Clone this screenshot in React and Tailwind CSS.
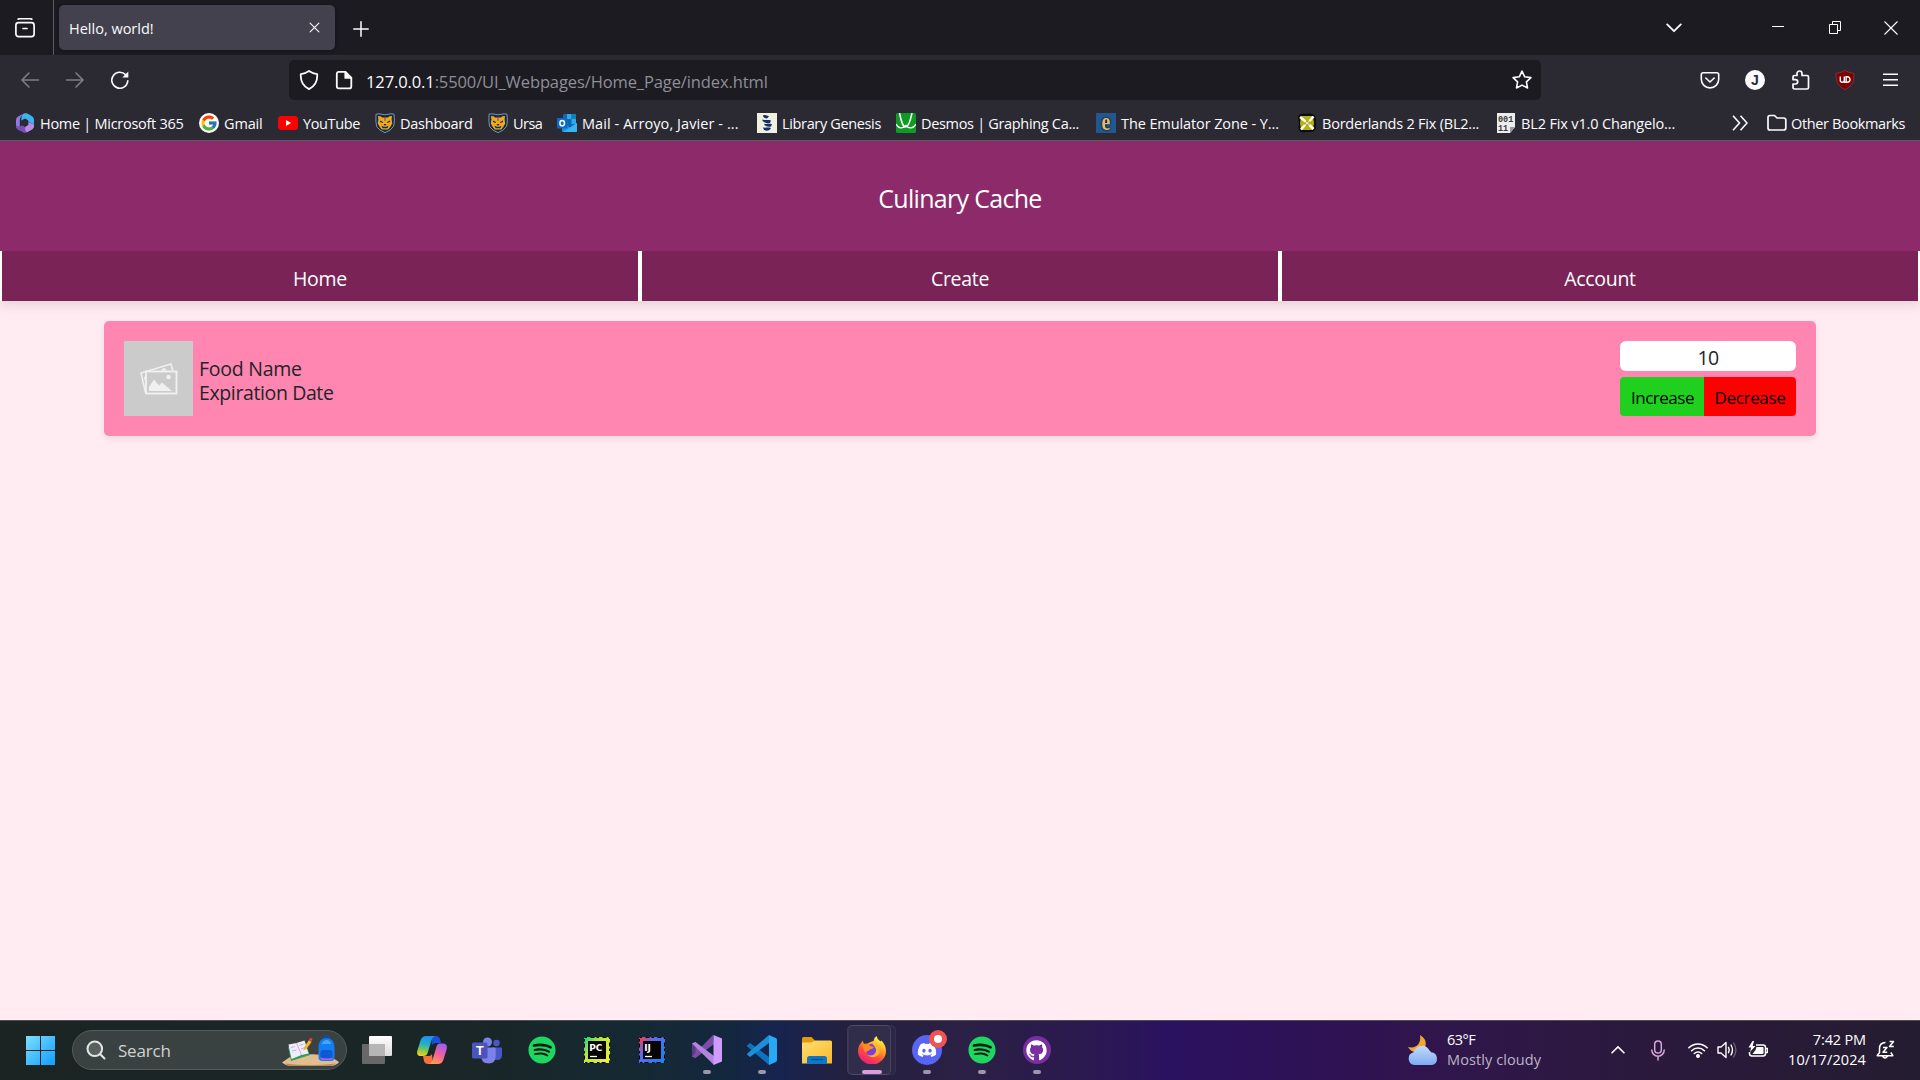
import React from 'react';
import { FaDiscord, FaGithub, FaSpotify } from 'react-icons/fa';
import { FcGoogle } from 'react-icons/fc';

/* ---------- browser chrome icons ---------- */

const Line = ({ size = 20, className = '', w = 1.5, children }) => (
  <svg
    width={size}
    height={size}
    viewBox="0 0 20 20"
    fill="none"
    stroke="currentColor"
    strokeWidth={w}
    strokeLinecap="round"
    strokeLinejoin="round"
    className={`shrink-0 ${className}`}
  >
    {children}
  </svg>
);

const FirefoxView = () => (
  <Line w={1.7} className="text-[#fbfbfe]">
    <path d="M3.2 1.2C3.6.8 4.2.7 5 .7h10c.8 0 1.4.1 1.8.5" />
    <rect x="0.9" y="4.6" width="18.2" height="14" rx="2.6" />
    <path d="M8 10.5h4" />
  </Line>
);

const Reload = () => (
  <Line w={1.6}>
    <path d="M17.8 10.7A8 8 0 1 1 15.5 4.6L17 6.2" />
    <path d="M18.3 1.6v6h-6z" fill="currentColor" stroke="none" />
  </Line>
);

/* ---------- bookmark favicons ---------- */

const M365 = () => (
  <svg width="20" height="20" viewBox="0 0 20 20">
    <path d="M9 .5 3 3.6Q1 4.700 1 7v6q0 2.200 2 3.400l3 1.700c-1-1-1.200-2-1.200-4V7.500C4.800 4.500 7 2 9 .5z" fill="#8f7be0" />
    <path d="M9 .5c2-.8 3.500 0 4.800.7L17 3.200q2 1.200 2 3.600v4.700L13 8.600V7.200L10 5.500 6.500 7.500C6 4 7 1.500 9 .5z" fill="#3cb5ee" />
    <path d="M1 12c2 2 4 1.500 6 .5l6-3.600 6 2.600v1.800q0 2-2 3.200l-5 2.800q-2 1-4 0l-5-2.900q-2-1.200-2-3.400z" fill="#7950b5" />
    <path d="M13 9l6 2.500v1.800q0 2-2 3.200l-5 2.800c-3-2-2-6 1-10.300z" fill="#b78ce6" />
    <path d="m10 6 3.300 2v4L10 14l-3.300-2V8z" fill="#2b2a33" />
  </svg>
);

const Gmail = () => (
  <span className="flex size-5 items-center justify-center rounded-full bg-white">
    <FcGoogle size={18} />
  </span>
);

const YouTube = () => (
  <svg width="20" height="20" viewBox="0 0 20 20">
    <rect x="0" y="3" width="20" height="14" rx="3.500" fill="#f00" />
    <path d="M8 7v6l5-3z" fill="#fff" />
  </svg>
);

const Bear = () => (
  <svg width="20" height="20" viewBox="0 0 20 20">
    <path d="M1 1.200 4 .8l6 1 6-1 3 .4c.5 5 .6 9-.6 12.300Q16 17.500 10 19.700 4 17.500 1.600 13.500.500 9 1 1.200z" fill="#122b4d" stroke="#8aa0b4" strokeWidth="0.900" />
    <path d="m3 3 2.600.3L7 4.500h6l1.400-1.200L17 3l-.4 3.400.6 4-2 3.600-2 2.600H6.800l-2-2.600-2-3.600.6-4z" fill="#f2a81d" />
    <path d="m5 7.500 3 1.500-.3 1L5 9zM15 7.500l-3 1.500.3 1L15 9zM8.500 11h3L10 13zM6.500 12.500l1 2.800h5l1-2.800-2 1.300h-3zM9.700 4.500h.6V8h-.6z" fill="#122b4d" />
  </svg>
);

const Outlook = () => (
  <svg width="20" height="20" viewBox="0 0 20 20">
    <rect x="6" y="1" width="13" height="12" rx="1" fill="#1066b5" />
    <rect x="10" y="1" width="4.500" height="5" fill="#32a9e7" />
    <rect x="14.500" y="1" width="4.500" height="5" fill="#167eb4" />
    <rect x="14.500" y="6" width="4.500" height="5" fill="#32a9e7" />
    <path d="M5 10h1l7 4 7-4v8a1 1 0 0 1-1 1H6a1 1 0 0 1-1-1z" fill="#1f8fe0" />
    <path d="m20 10-14 9h13a1 1 0 0 0 1-1z" fill="#35b8f1" />
    <rect x="0" y="5" width="10.500" height="10.500" rx="1" fill="#0a6cc8" />
    <ellipse cx="5.200" cy="10.200" rx="2.300" ry="2.600" fill="none" stroke="#fff" strokeWidth="1.500" />
  </svg>
);

const LibGen = () => (
  <svg width="20" height="20" viewBox="0 0 20 20">
    <rect width="20" height="20" fill="#f0f0e0" />
    <path d="M6 2.500c2-1 4 0 6 .7l-2 2.300c-2 0-4-1-4-3zM5 6.500c3 1 7 0 9 1l-1 2.500c-3 .5-7 0-8-3.500zM7 10.700c3 .6 6-.6 8 .6l-1 2.200c-3 .7-6 0-7-2.800zM6 14.500c3 .5 5-.5 8 .5-1 3-7 4.500-8-.5z" fill="#12306b" />
  </svg>
);

const Desmos = () => (
  <svg width="20" height="20" viewBox="0 0 20 20">
    <rect width="20" height="20" rx="1.500" fill="#0f9a25" />
    <path d="M3.500 0c1.500 7 3 14 6 14s5-7 6.500-14" fill="none" stroke="#fff" strokeWidth="1.500" />
    <path d="M0 11c3 5 6 5 10 1.500 3 3.500 7 3.500 10-1.500" fill="none" stroke="#fff" strokeWidth="1.300" />
  </svg>
);

const Emulator = () => (
  <span className="flex size-5 items-center justify-center bg-[#23578f]">
    <span className="-mt-[5px] scale-y-125 font-['Liberation_Serif',serif] text-[20px] leading-none font-bold text-[#e0bd6c] [text-shadow:0_0_2px_#14202c,0_0_2px_#14202c]">
      e
    </span>
  </span>
);

const Nexus = () => (
  <svg width="20" height="20" viewBox="0 0 20 20">
    <path d="M2 2q2-2 5-1l5-.5q4-.5 6 2.500 1.500 3 .6 6 1.200 5-.6 8-2 2.500-7 1.800L6 19.500Q2 19 1.500 15L2 9Q0 5 2 2z" fill="#0b0b0b" />
    <path d="M4 3h12l1 7-1 7H4l-1-7z" fill="#b5b013" />
    <path d="M3 4 8.500 8.500M16.500 3.500l-4 4.500M4 16.500l4-4.500M16.500 16 12.500 12" stroke="#fff" strokeWidth="2.500" />
    <path d="M4 5l12 10M15.500 5l-11 10.500" stroke="#fff" strokeWidth="0.800" />
  </svg>
);

const Binary = () => (
  <svg width="20" height="20" viewBox="0 0 20 20">
    <path d="M1 0h18v14l-5 6H1z" fill="#ededed" />
    <path d="m14 20 5-6h-5z" fill="#9a9a9a" />
    <g fill="#3a3a3a" fontFamily="Liberation Mono, monospace" fontWeight="bold" fontSize="8.500">
      <text x="2" y="8.500">001</text>
      <text x="2" y="18">11</text>
    </g>
  </svg>
);

const bookmarks = [
  ['Home | Microsoft 365', M365, 'w-[184px]', 'tracking-[-0.280px]'],
  ['Gmail', Gmail, 'w-[79px]', 'tracking-[-0.150px]'],
  ['YouTube', YouTube, 'w-[97px]', 'tracking-[-0.380px]'],
  ['Dashboard', Bear, 'w-[113px]', 'tracking-[-0.250px]'],
  ['Ursa', Bear, 'w-[69px]', 'tracking-[-0.550px]'],
  ['Mail - Arroyo, Javier - ...', Outlook, 'w-[200px]', 'tracking-[0.080px]'],
  ['Library Genesis', LibGen, 'w-[139px]', 'tracking-[-0.350px]'],
  ['Desmos | Graphing Ca...', Desmos, 'w-[200px]', 'tracking-[-0.320px]'],
  ['The Emulator Zone - Y...', Emulator, 'w-[201px]', 'tracking-[-0.100px]'],
  ['Borderlands 2 Fix (BL2...', Nexus, 'w-[199px]', 'tracking-[-0.220px]'],
  ['BL2 Fix v1.0 Changelo...', Binary, 'w-[201px]', 'tracking-[-0.150px]'],
];

function TabStrip() {
  return (
    <div className="flex h-[55px] items-center bg-[#1c1b22] text-[#fbfbfe]">
      <div className="flex h-full w-[54px] items-center justify-center border-r border-[#5b5b66] pr-[3px]">
        <FirefoxView />
      </div>
      <div className="ml-[5px] flex h-[45px] w-[276px] items-center justify-between rounded-[5px] bg-[#42414d] pr-[15px] pl-[10px] shadow-[0_0_4px_rgba(0,0,0,0.400)]">
        <span className="pt-[2px] text-[14.500px]">Hello, world!</span>
        <Line size={11} w={2} className="mb-px">
          <path d="m2 2 16 16M18 2 2 18" />
        </Line>
      </div>
      <Line size={16} w={1.900} className="mt-[2px] ml-[18px]">
        <path d="M10 1v18M1 10h18" />
      </Line>
      <div className="ml-auto flex items-center">
        <Line size={16} w={2.300} className="mr-[90px]">
          <path d="m1.500 5.500 8.500 8.500 8.500-8.500" />
        </Line>
        <div className="mb-[3px] h-px w-3 bg-white" />
        <svg width="12" height="13" viewBox="0 0 12 13" fill="none" stroke="#fff" className="ml-[45px]">
          <path d="M.5 3.500h8v9h-8zM3.500 3V.5h8v9H9" />
        </svg>
        <svg width="14" height="14" viewBox="0 0 14 14" stroke="#fff" strokeWidth="1.100" className="mr-[22px] ml-[43px]">
          <path d="m.5.500 13 13M13.500.500l-13 13" />
        </svg>
      </div>
    </div>
  );
}

function Toolbar() {
  return (
    <div className="flex h-[50px] items-center bg-[#2b2a33] text-[#fbfbfe]">
      <Line className="ml-5 text-[#7e7d84]" w={1.600}>
        <path d="M18.500 10H2M9 3 2 10l7 7" />
      </Line>
      <Line className="ml-[25px] text-[#7e7d84]" w={1.600}>
        <path d="M1.500 10H18M11 3l7 7-7 7" />
      </Line>
      <span className="ml-[25px]"><Reload /></span>
      <div className="ml-[159px] flex h-10 w-[1252px] items-center rounded-[5px] bg-[#1c1b22] pr-[9px] pl-[10px]">
        <Line w={1.800}>
          <path d="M10 .9c2.500 1.700 5 2.700 8.200 3.300.4 6-1.500 11.500-8.200 14.900C3.300 15.700 1.400 10.200 1.800 4.200 5 3.600 7.500 2.600 10 .9z" />
        </Line>
        <Line w={1.800} className="ml-[15px]">
          <path d="M4.800 1.900h6.500l6 6v8.500q0 2-2 2H4.800q-2 0-2-2V3.900q0-2 2-2z" />
          <path d="M11.300 1.900v6h6z" fill="currentColor" />
        </Line>
        <div className="ml-[12px] pt-[5px] text-[16.500px] tracking-[-0.110px] text-[#8f8f96]">
          <span className="text-[#fbfbfe]">127.0.0.1</span>:5500/UI_Webpages/Home_Page/index.html
        </div>
        <Line w={1.600} className="ml-auto">
          <path d="m10 1.200 2.700 5.600 6.200.8-4.500 4.300 1.100 6.100L10 15.100 4.500 18l1.100-6.100L1.100 7.600l6.200-.8z" />
        </Line>
      </div>
      <Line w={1.600} className="ml-[159px]">
        <path d="M3.200 2.700h13.600q1.900 0 1.900 1.900v4.600a8.700 8.700 0 0 1-17.400 0V4.600q0-1.900 1.900-1.900zM5.800 8l4.200 4 4.200-4" />
      </Line>
      <span className="ml-[25px] flex size-5 items-center justify-center rounded-full bg-[#fbfbfe] font-['Liberation_Sans',sans-serif] text-[14px] leading-none font-bold text-[#2b2a33]">
        J
      </span>
      <Line w={1.700} className="ml-[26px]">
        <path d="M2 7.500V7q0-1.500 1.500-1.500H6V3.500a2.500 2.500 0 0 1 5 0v2h5q1.500 0 1.500 1.500v10.500q0 1.500-1.500 1.500H3.500Q2 19 2 17.500V14h2.500a2.200 2.200 0 0 0 0-4.400H2z" />
      </Line>
      <svg width="20" height="20" viewBox="0 0 20 20" className="ml-[24px]">
        <path d="M10 .3c2.500 1.800 5 2.500 8.800 3 .3 6.500-.3 12-8.800 16.400C1.500 15.300.9 9.800 1.200 3.300 5 2.800 7.500 2.100 10 .3z" fill="#800000" stroke="#a04048" strokeWidth="0.600" />
        <path d="M5.300 6.500v3.700q0 2 2 2t2-2V6.500M9.300 12.200h3a2.700 2.700 0 0 0 0-5.400h-1.200v5.400" fill="none" stroke="#fff" strokeWidth="1.400" />
      </svg>
      <svg width="15" height="20" viewBox="0 0 15 20" stroke="#fbfbfe" strokeWidth="1.500" className="ml-[28px]">
        <path d="M0 4.200h15M0 9.700h15M0 15.200h15" />
      </svg>
    </div>
  );
}

function BookmarksBar() {
  return (
    <div className="flex h-9 items-center border-b border-[#5a5964] bg-[#2b2a33] pt-px pl-[15px] text-[14.500px] whitespace-nowrap text-[#fbfbfe]">
      {bookmarks.map(([label, Icon, width, tracking]) => (
        <div key={label} className={`flex shrink-0 items-center gap-[5px] ${width}`}>
          <span className="size-5 shrink-0"><Icon /></span>
          <span className={`pt-px ${tracking}`}>{label}</span>
        </div>
      ))}
      <svg width="16" height="16" viewBox="0 0 16 16" fill="none" stroke="currentColor" strokeWidth="1.600" className="ml-[35px]">
        <path d="m1 .8 6.500 7.200L1 15.200M8.500.8 15 8l-6.500 7.200" />
      </svg>
      <Line w={1.700} className="ml-[19px]">
        <path d="M1 15V4.500Q1 2.500 3 2.500h4.500L10 5h6.500q2.300 0 2.300 2v8q0 2-2.300 2H3q-2 0-2-2z" />
      </Line>
      <span className="ml-[4px] pt-px tracking-[-0.360px]">Other Bookmarks</span>
    </div>
  );
}

/* ---------- web page ---------- */

const Placeholder = () => (
  <svg width="69" height="75" viewBox="0 0 69 75" className="shrink-0 bg-[#cbcbcb]">
    <g fill="none" stroke="#f0f0f0" strokeWidth="1.600">
      <path d="M21.500 51.500 17 32l30-9 1.700 6.500" />
      <rect x="22" y="30.500" width="30.500" height="22" strokeWidth="1.900" />
    </g>
    <circle cx="44.500" cy="36" r="2.300" fill="#f0f0f0" />
    <path d="M25 50v-4l5-7.500 5 6 3-3 10 8.500zM37.500 30a2.500 2.500 0 0 1 5-.5z" fill="#f0f0f0" />
    <path d="m22 35-2 1 2 10z" fill="#f0f0f0" />
  </svg>
);

function WebPage() {
  return (
    <main className="flex-1 bg-[#ffebf1] text-[#212529]">
      <header className="relative z-10 flex h-[110px] items-center justify-center bg-[#8d2a69] pt-[5px] text-[25px] tracking-[-0.700px] text-white">
        Culinary Cache
      </header>
      <nav className="grid h-[50px] grid-cols-3 gap-1 bg-white px-[2px] shadow-[0_3px_12px_rgba(0,0,0,0.120)]">
        {['Home', 'Create', 'Account'].map((label) => (
          <a key={label} className="flex items-center justify-center bg-[#7a2357] pt-[5px] text-[19.500px] tracking-[-0.300px] text-white">
            {label}
          </a>
        ))}
      </nav>
      <section className="mx-[104px] mt-5 flex h-[115px] justify-between rounded-[5px] bg-[#ff86b0] p-5 shadow-[0_3px_6px_rgba(0,0,0,0.080)]">
        <div className="flex items-center gap-[6px]">
          <Placeholder />
          <div className="pt-[4px] text-[19.500px] leading-6 tracking-[-0.380px]">
            <p className="tracking-[-0.250px]">Food Name</p>
            <p>Expiration Date</p>
          </div>
        </div>
        <div className="w-44">
          <div className="flex h-[30px] items-center justify-center rounded-[6px] bg-white pt-[4px] text-[19.500px] tracking-[-0.600px]">10</div>
          <div className="mt-[6px] flex h-[39px] overflow-hidden rounded-[4px] text-[17px] text-black">
            <button className="w-[84px] bg-[#1fd01f] pt-[3px] pl-px tracking-[-0.500px]">Increase</button>
            <button className="w-[92px] bg-[#ff0000] pt-[3px] tracking-[-0.350px]">Decrease</button>
          </div>
        </div>
      </section>
    </main>
  );
}

/* ---------- taskbar ---------- */

const StartIcon = () => (
  <svg width="29" height="29" viewBox="0 0 29 29">
    <defs>
      <linearGradient id="win" x1="0" y1="0" x2="1" y2="1" gradientUnits="objectBoundingBox">
        <stop offset="0" stopColor="#7be0ff" />
        <stop offset="1" stopColor="#0f9dff" />
      </linearGradient>
      <mask id="panes">
        <path d="M0 0h14v14H0zM15 0h14v14H15zM0 15h14v14H0zM15 15h14v14H15z" fill="#fff" />
      </mask>
    </defs>
    <rect width="29" height="29" fill="url(#win)" mask="url(#panes)" />
  </svg>
);

const SchoolArt = () => (
  <svg width="58" height="32" viewBox="0 0 58 32">
    <path d="M0 27.500 8 22q20-5 40-1l9 6q-2 3-8 4H10q-6 0-10-3.500z" fill="#e3bd8f" />
    <path d="M3 28.500q25 3 51 0l-5 2.500H10q-5 0-7-2.500z" fill="#b98a5c" />
    <path d="m6 12 17-5 5 13-19 6z" fill="#2f9e57" />
    <path d="m6.500 9.500 8-1.500 8-2.500 4 13-7 1.500-10 4z" fill="#f1ecfa" />
    <path d="m14.500 8 5 12M9 12.500l4-1M10 16l4.500-1M17.500 10.500l4-1.500M19 14l4-1.500" stroke="#b9addb" strokeWidth="0.900" />
    <path d="m22 12.500 5-7.500 2.500 2-5 7-3.200 1.500z" fill="#f7b32d" />
    <path d="m26.700 5 1.600-2q1.500-.5 2.200 1l-1.200 2.500z" fill="#e9432f" />
    <path d="M41.500 4a3 3 0 0 1 6 0" fill="none" stroke="#0b4fb8" strokeWidth="1.600" />
    <path d="M36.500 13q0-10 8-10t8 10v9q0 4-4 4h-8q-4 0-4-4z" fill="#147df0" />
    <path d="M39.500 9q2-4 5-4t5 4z" fill="#46a6ff" />
    <rect x="38.500" y="15" width="12" height="9" rx="2.500" fill="#0d5bd2" />
    <path d="M38.500 22.500q6 2 12 0v.5q0 2-2.500 2h-7q-2.500 0-2.500-2z" fill="#b05ff0" />
  </svg>
);

const TaskView = () => (
  <svg width="30" height="28" viewBox="0 0 30 28">
    <defs>
      <linearGradient id="tv" x1="0" y1="0" x2="0" y2="1">
        <stop offset="0" stopColor="#ffffff" />
        <stop offset="1" stopColor="#dcdcdc" />
      </linearGradient>
    </defs>
    <rect x="0" y="8" width="23" height="20" rx="1" fill="#686868" />
    <rect x="7" y="0" width="23" height="20" rx="1" fill="url(#tv)" />
    <path d="M7 8h16v12H7z" fill="#b6b6b6" />
  </svg>
);

const Copilot = () => (
  <svg width="30" height="28" viewBox="0 0 30 28">
    <defs>
      <linearGradient id="cpA" x1="0.500" y1="0" x2="0.300" y2="1">
        <stop offset="0" stopColor="#1f8ff0" />
        <stop offset="0.400" stopColor="#22b0c8" />
        <stop offset="0.700" stopColor="#7cc653" />
        <stop offset="1" stopColor="#f5cf1c" />
      </linearGradient>
      <linearGradient id="cpB" x1="0.700" y1="0" x2="0.300" y2="1">
        <stop offset="0" stopColor="#a05cf5" />
        <stop offset="0.500" stopColor="#f0609c" />
        <stop offset="1" stopColor="#ff9a52" />
      </linearGradient>
    </defs>
    <path d="M14 0h5q3 0 4 3l1 4h-5q-3 0-4 2z" fill="#1b50d8" />
    <path d="M16 28h-5q-3 0-4-3l-1-5h6q2 0 3-2z" fill="#f8703a" />
    <path d="M9 0h9q-2.500 1-3.500 4l-3.700 12.500Q9.800 20 6.500 20H4q-5 0-3.600-5.500L3.500 4.500Q5 0 9 0z" fill="url(#cpA)" />
    <path d="M21 28h-9q2.500-1 3.500-4l3.700-12.500Q20.200 7 23.500 7.500H26q5 0 3.600 6l-3.100 10Q25 28 21 28z" fill="url(#cpB)" />
  </svg>
);

const Teams = () => (
  <svg width="30" height="27" viewBox="0 0 30 27">
    <circle cx="24.500" cy="6" r="3.200" fill="#4a57c8" />
    <path d="M20 10.500h9q1 0 1 1v6q0 5.500-5 5.500t-5-5.500z" fill="#4a57c8" />
    <circle cx="15.500" cy="5" r="4.500" fill="#7b83eb" />
    <path d="M9 10.500h13.500q1.200 0 1.200 1.200V19q0 7.500-7.200 7.500T9 19z" fill="#7b83eb" />
    <rect x="0" y="5.500" width="15.500" height="16" rx="1.500" fill="#4b53bc" />
    <text x="7.700" y="17.900" textAnchor="middle" fill="#fff" fontFamily="Liberation Sans" fontWeight="bold" fontSize="12.500">T</text>
  </svg>
);

const Spotify = () => (
  <span className="flex size-[28px] items-center justify-center">
    <span className="flex size-[26px] items-center justify-center rounded-full bg-[#101c14]">
      <FaSpotify size={28} className="shrink-0 text-[#1ed760]" />
    </span>
  </span>
);

function JetBrains({ id, label, stops }) {
  return (
    <svg width="26" height="26" viewBox="0 0 26 26">
      <defs>
        <linearGradient id={id} x1="0" y1="0.100" x2="1" y2="0.900">
          <stop offset="0" stopColor={stops[0]} />
          <stop offset="0.350" stopColor={stops[1]} />
          <stop offset="1" stopColor={stops[2]} />
        </linearGradient>
      </defs>
      <rect width="26" height="26" fill={`url(#${id})`} />
      <rect x="0.500" y="0.500" width="25" height="25" fill="none" stroke="#000" strokeDasharray="2.500 3.500 4 2" />
      <rect x="4" y="4" width="18" height="18" fill="#050505" />
      <text x="5.200" y="13.500" fill="#fff" fontFamily="DejaVu Sans" fontWeight="bold" fontSize="9">{label}</text>
      <path d="M6 19.500h7" stroke="#fff" strokeWidth="1.300" />
    </svg>
  );
}

const VisualStudio = () => (
  <svg width="30" height="30" viewBox="0 0 30 30">
    <path d="M0 8.500 3.500 7 12 15l-8.500 8L0 21.500z" fill="#7d4fa8" />
    <path d="M0 8.500 3.500 7v16L0 21.500z" fill="#5c3b85" />
    <path d="M21 0 0 21.500 3.500 23 22 9z" fill="#7a4da6" />
    <path d="M0 8.500 3.500 7 22 21v9L0 8.500z" fill="#b283e0" />
    <path d="m21.500 0 8.500 3.500v23L21.500 30z" fill="#cf9bff" />
  </svg>
);

const VSCode = () => (
  <svg width="30" height="30" viewBox="0 0 30 30">
    <path d="M0 10.500 3 8l19 14v8L.3 11.500z" fill="#0c74bd" />
    <path d="M22 0 .3 18.500Q-.3 19.500.5 20L3 22 22 8z" fill="#1b8fdc" />
    <path d="m22 0 6.800 3Q30 3.700 30 5v20q0 1.300-1.200 2L22 30z" fill="#29a9f3" />
  </svg>
);

const Folder = () => (
  <svg width="30" height="27" viewBox="0 0 30 27">
    <defs>
      <linearGradient id="fold" x1="0" y1="0" x2="1" y2="1">
        <stop offset="0" stopColor="#ffdf72" />
        <stop offset="1" stopColor="#f9b92a" />
      </linearGradient>
    </defs>
    <path d="M0 1.500Q0 0 1.500 0h8l3.500 3.500V10H0z" fill="#e09a0c" />
    <path d="M0 5.500h9.500L13 3.500h15.500q1.500 0 1.500 1.500v21.500H0z" fill="url(#fold)" />
    <path d="M5 27v-5.500q0-2.500 2.500-2.500h15q2.500 0 2.500 2.500V27z" fill="#1076c6" />
    <path d="M9 22.500h12" stroke="#0a4c8c" strokeWidth="1.300" />
  </svg>
);

const Firefox = () => (
  <svg width="28" height="28" viewBox="0 0 28 28">
    <defs>
      <linearGradient id="ff" x1="0.800" y1="0" x2="0.250" y2="1">
        <stop offset="0.100" stopColor="#fff044" />
        <stop offset="0.400" stopColor="#ff9d22" />
        <stop offset="0.650" stopColor="#ff4a3e" />
        <stop offset="1" stopColor="#e8178a" />
      </linearGradient>
    </defs>
    <path d="M4.500 4.500 6 8l3.500-.5 3-1.500 3-1Q15.500 2 18.500 0q.5 3 4 5.500l1-1q4.500 5 4.500 10.500a14 13.500 0 0 1-28 0Q0 9.500 3.500 6.500z" fill="url(#ff)" />
    <circle cx="14" cy="14" r="6.200" fill="#7b3fe0" />
    <path d="M5 8q5-1 7.500 2l3.500 1q-.5 2-3.500 2.200-2 .6-2 2Q9 14 8 17q-4-4-3-9z" fill="#ff8a1e" />
    <path d="M14 7.500q5 0 7 4 2.500 6-3 9-5 2-9-2 5 2.500 8-1 3.500-4-3-10z" fill="#ffb52b" />
  </svg>
);

const Weather = () => (
  <svg width="30" height="30" viewBox="0 0 30 30">
    <defs>
      <linearGradient id="cloud" x1="0" y1="0" x2="0" y2="1">
        <stop offset="0" stopColor="#c3dcff" />
        <stop offset="1" stopColor="#7fa9ee" />
      </linearGradient>
    </defs>
    <path d="M12 0q7 4 5.500 11-2 6-9 6.500Q3 17 0 12q7 1.500 10.500-3Q13 5 12 0z" fill="#f2a72e" />
    <path d="M6.500 30a6.500 6.500 0 0 1-.8-12.800A8.500 8.500 0 0 1 21.500 15.500q1 .5 1.500 1.700A6.500 6.500 0 0 1 24 30z" fill="url(#cloud)" />
  </svg>
);

const Dot = () => <span className="h-1 w-2 rounded-full bg-[#9a98a8]" />;

function TaskbarApp({ children, running, active }) {
  return (
    <div className="relative flex h-[59px] w-[55px] shrink-0 items-center justify-center">
      {active && (
        <>
          <span className="absolute top-[4px] left-[4px] h-[50px] w-[48px] rounded-[5px] border border-white/5 bg-white/[0.030]" />
          <span className="absolute top-[4px] left-[3px] h-[50px] w-[44px] rounded-[5px] border border-white/10 bg-white/[0.030]" />
        </>
      )}
      <span className="relative">{children}</span>
      {running && <span className="absolute inset-x-0 bottom-[6px] flex justify-center"><Dot /></span>}
      {active && <span className="absolute bottom-[6px] left-[18px] h-1 w-5 rounded-full bg-[#dc9be0]" />}
    </div>
  );
}

function Taskbar() {
  return (
    <footer className="flex h-[60px] items-center border-t border-[#4c5254] bg-[linear-gradient(90deg,#1b2423_0%,#1a2627_25%,#152933_33%,#13273e_38%,#17244f_40.500%,#23203f_44%,#2b2045_50%,#2a1a4e_56%,#2b1260_61%,#2f1253_70%,#30164c_75%,#2b193d_85%,#241c30_100%)] pb-px text-white">
      <span className="mt-px ml-[26px]"><StartIcon /></span>
      <div className="ml-[17px] flex h-10 w-[275px] items-center rounded-full border border-[#545c5b] bg-[#3a4241] pl-[13px]">
        <Line w={2} className="text-[#e4e6e6]">
          <circle cx="8.800" cy="8.800" r="7.300" fill="#59615f" />
          <path d="m14.300 14.300 4.200 4.200" />
        </Line>
        <span className="mt-[2px] ml-[12px] text-[17px] tracking-[-0.200px] text-[#cfd3d2]">Search</span>
        <span className="mt-[2px] mr-[6px] ml-auto"><SchoolArt /></span>
      </div>
      <div className="ml-[2px] flex">
        <TaskbarApp><TaskView /></TaskbarApp>
        <TaskbarApp><Copilot /></TaskbarApp>
        <TaskbarApp><Teams /></TaskbarApp>
        <TaskbarApp><Spotify /></TaskbarApp>
        <TaskbarApp><JetBrains id="pc" label="PC" stops={['#21d789', '#b5e63a', '#f5f03c']} /></TaskbarApp>
        <TaskbarApp><JetBrains id="ij" label="IJ" stops={['#fc3b58', '#5a6cf0', '#1a82f0']} /></TaskbarApp>
        <TaskbarApp running><VisualStudio /></TaskbarApp>
        <TaskbarApp running><VSCode /></TaskbarApp>
        <TaskbarApp><Folder /></TaskbarApp>
        <TaskbarApp active><Firefox /></TaskbarApp>
        <TaskbarApp running>
          <span className="flex size-[30px] items-center justify-center rounded-full bg-[#5865f2]">
            <FaDiscord size={20} className="text-white" />
          </span>
          <span className="absolute -top-[5px] left-[17px] flex size-[18px] items-center justify-center rounded-full bg-[#ed5555]">
            <span className="size-2 rounded-full bg-white" />
          </span>
        </TaskbarApp>
        <TaskbarApp running><Spotify /></TaskbarApp>
        <TaskbarApp running>
          <span className="flex size-[28px] items-center justify-center rounded-full bg-[#7a2fa0]">
            <FaGithub size={21} className="text-white" />
          </span>
        </TaskbarApp>
      </div>
      <div className="ml-auto flex items-center">
        <Weather />
        <div className="ml-[9px] w-[155px] text-[14.500px] leading-5">
          <p className="tracking-[-0.500px]">63°F</p>
          <p className="tracking-[0.100px] text-[#bdb4c6]">Mostly cloudy</p>
        </div>
        <Line size={14} w={2.300} className="ml-[9px]">
          <path d="m1.500 14 8.500-8.500 8.500 8.500" />
        </Line>
        <svg width="14" height="21" viewBox="0 0 14 21" fill="none" stroke="#d9a4dc" strokeWidth="1.500" strokeLinecap="round" className="ml-[26px]">
          <rect x="3.700" y="1" width="6.600" height="12" rx="3.300" />
          <path d="M.8 10a6.200 6.200 0 0 0 12.400 0M7 16.500V20" />
        </svg>
        <svg width="20" height="16" viewBox="0 0 20 16" fill="none" stroke="#fff" strokeWidth="1.600" strokeLinecap="round" className="ml-[23px]">
          <path d="M.9 5.800a12.800 12.800 0 0 1 18.200 0M3.600 8.700a9 9 0 0 1 12.800 0M6.300 11.500a5.200 5.200 0 0 1 7.400 0" />
          <circle cx="10" cy="14" r="1.200" fill="#fff" />
        </svg>
        <svg width="21" height="18" viewBox="0 0 21 18" fill="none" stroke="#fff" strokeWidth="1.400" strokeLinecap="round" strokeLinejoin="round" className="ml-[9px]">
          <path d="M1 6v6h3l5 4.500v-15L4 6zM11.500 6.300q1.600 2.700 0 5.400M14 4q3 5 0 10" />
          <path d="M16.700 2q4.300 7 0 14" stroke="#6a5c78" />
        </svg>
        <svg width="20" height="18" viewBox="0 0 20 18" fill="none" stroke="#fff" strokeWidth="1.500" strokeLinejoin="round" className="ml-[10px]">
          <path d="M8 4h7q2.500 0 2.500 2.500v6Q17.500 15 15 15H4q-2.500 0-2.500-2.500V11" />
          <path d="M18 7.500h1.500v4H18" />
          <path d="M8.500 6h6q1 0 1 1v5q0 1-1 1h-10l3-4z" fill="#fff" stroke="none" />
          <path d="M4.500 0 .5 6.500h2.700L2 11l5.500-6H4.700L6 0z" fill="#fff" stroke="none" />
        </svg>
        <div className="w-[98px] text-right text-[14.500px] leading-5">
          <p className="tracking-[-0.150px]">7:42 PM</p>
          <p className="tracking-[0.100px]">10/17/2024</p>
        </div>
        <svg width="19" height="20" viewBox="0 0 19 20" fill="none" stroke="#fff" strokeWidth="1.500" strokeLinejoin="round" className="mr-[25px] ml-[10px]">
          <path d="M9.500 2.500Q3.500 2.700 3.500 8.500v4L1.200 15.700h15.600l-2-3.200M6.500 16q2.500 4 5 0" />
          <path d="M7 7.500h4l-4 4.700h4.200M13.500 1.500h4L13.500 6.500h4.300" />
        </svg>
      </div>
    </footer>
  );
}

export default function App() {
  return (
    <div className="flex h-[1080px] w-[1920px] flex-col overflow-hidden font-['Open_Sans',sans-serif]">
      <TabStrip />
      <Toolbar />
      <BookmarksBar />
      <WebPage />
      <Taskbar />
    </div>
  );
}
